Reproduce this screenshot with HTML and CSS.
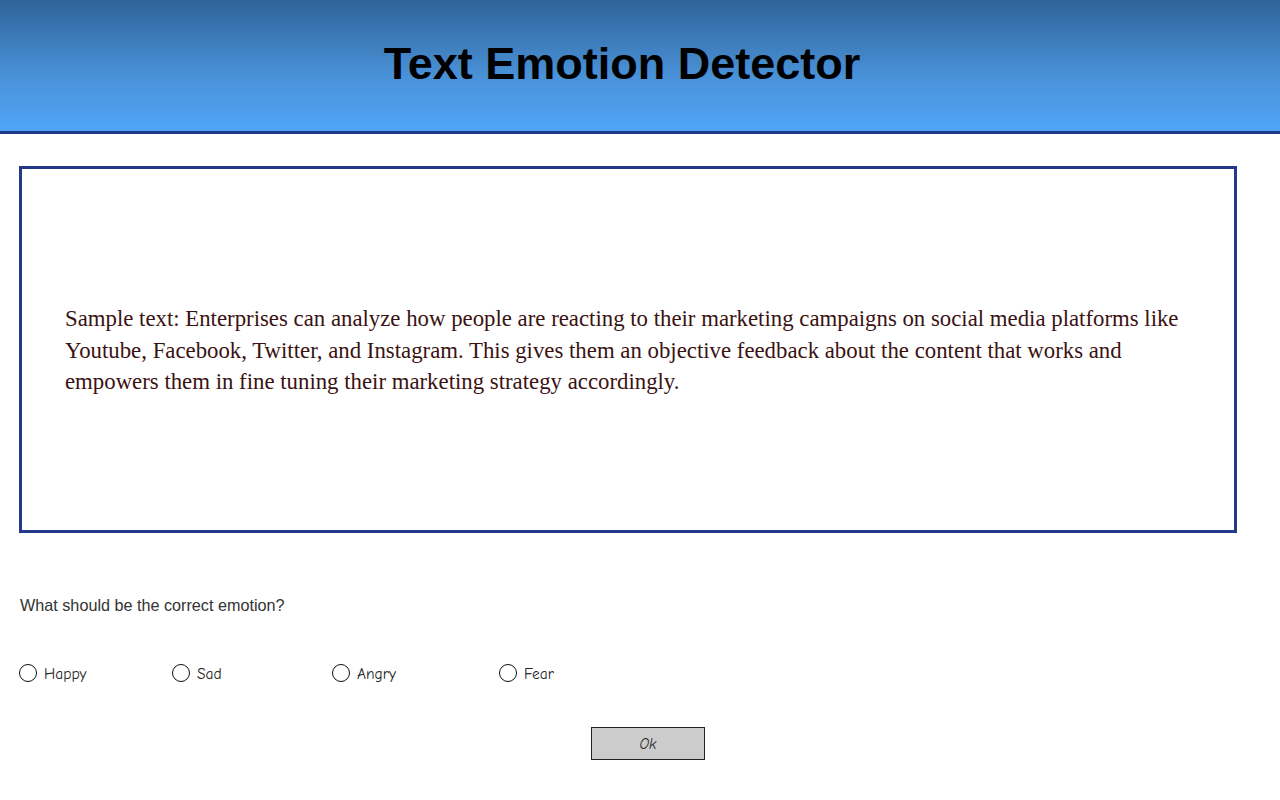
FILE: index.html
```html
<!DOCTYPE html>
<html>
<head>
<meta charset="utf-8">
<link rel="stylesheet" href="styles.css">
</head>
<body>
<header class="header">
  <h1 class="title">Text Emotion Detector</h1>
</header>
<main class="main">
  <section class="sample-box">
    <p class="sample-text">Sample text: Enterprises can analyze how people are reacting to their marketing campaigns on social media platforms like Youtube, Facebook, Twitter, and Instagram. This gives them an objective feedback about the content that works and empowers them in fine tuning their marketing strategy accordingly.</p>
  </section>
  <p class="question">What should be the correct emotion?</p>
  <div class="options">
    <label class="option opt-happy"><span class="radio"></span><span class="opt-label">Happy</span></label>
    <label class="option opt-sad"><span class="radio"></span><span class="opt-label">Sad</span></label>
    <label class="option opt-angry"><span class="radio"></span><span class="opt-label">Angry</span></label>
    <label class="option opt-fear"><span class="radio"></span><span class="opt-label">Fear</span></label>
  </div>
  <div class="actions">
    <button class="ok-btn">Ok</button>
  </div>
</main>
</body>
</html>
```

FILE: styles.css
```css
* { box-sizing: border-box; }
html, body { margin: 0; padding: 0; background: #fff; }
body { font-family: "Liberation Sans", Arial, sans-serif; }

.header {
  height: 134px;
  background: linear-gradient(to bottom, #2f6399 0%, #4a93da 60%, #50a5f8 100%);
  border-bottom: 3px solid #1e3a8c;
  display: flex;
  align-items: center;
  justify-content: center;
  padding: 0 36px 4px 0;
}
.title {
  margin: 0;
  font-size: 45px;
  font-weight: bold;
  color: #000;
}

.main { padding: 32px 44px 0 19px; }

.sample-box {
  width: 1218px;
  height: 367px;
  border: 3px solid #24398a;
  display: flex;
  align-items: center;
  padding: 2px 46px 0 43px;
}
.sample-text {
  margin: 0;
  font-family: "Liberation Serif", "Times New Roman", serif;
  font-size: 22.8px;
  line-height: 31.5px;
  color: #3a1212;
}

.question {
  margin: 63px 0 0 1px;
  font-size: 16.2px;
  color: #333;
}

.options {
  display: flex;
  margin-top: 47px;
  height: 22px;
  align-items: center;
}
.option {
  display: flex;
  align-items: center;
  gap: 7px;
  font-family: "Comic Sans MS", "Comic Neue", "DejaVu Sans", cursive;
  font-size: 15.5px;
  color: #222;
}
.opt-happy { width: 153px; }
.opt-sad { width: 160px; }
.opt-angry { width: 167px; }
.radio {
  width: 18px;
  height: 18px;
  border: 1.5px solid #111;
  border-radius: 50%;
  background: #fff;
  flex: none;
}
.opt-label { position: relative; top: 1px; }

.actions {
  display: flex;
  margin-top: 43px;
  padding-left: 572px;
}
.ok-btn {
  width: 114px;
  height: 33px;
  background: #cccccc;
  border: 1px solid #222;
  font-family: "Comic Sans MS", "Comic Neue", "DejaVu Sans", cursive;
  font-size: 15px;
  font-style: italic;
  color: #222;
  padding: 0;
}
```
